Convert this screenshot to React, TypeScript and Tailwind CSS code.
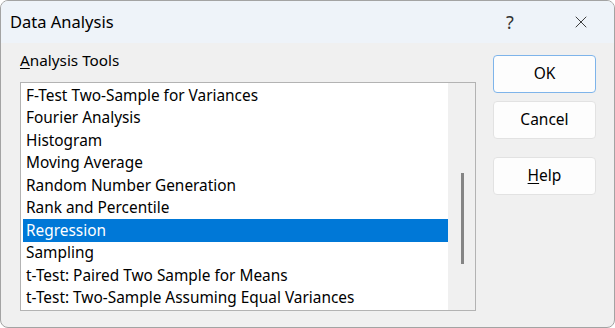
import { X } from "lucide-react";

const tools = [
  "F-Test Two-Sample for Variances",
  "Fourier Analysis",
  "Histogram",
  "Moving Average",
  "Random Number Generation",
  "Rank and Percentile",
  "Regression",
  "Sampling",
  "t-Test: Paired Two Sample for Means",
  "t-Test: Two-Sample Assuming Equal Variances",
];

const selected = "Regression";

export default function App() {
  return (
    <div className="w-[615px] h-[328px] bg-white font-['Noto_Sans',sans-serif] text-[#000]">
      <div className="flex h-full flex-col overflow-hidden rounded-[8px] border border-[#a3a3a3] bg-[#f0f0f0]">
        {/* Title bar */}
        <div className="flex h-[42px] shrink-0 items-center bg-[#eef3f9]">
          <span className="pl-[9px] text-[16.5px]">Data Analysis</span>
          <span className="ml-auto w-[30px] text-center text-[18px] text-[#333]">?</span>
          <div className="ml-[46px] mr-[23px] flex w-[20px] justify-center">
            <X size={30} strokeWidth={1.05} className="text-[#222]" />
          </div>
        </div>

        {/* Body */}
        <div className="flex flex-1">
          <div className="flex flex-col pl-[19px] pt-[7px]">
            <div className="h-[32px] text-[15.3px] leading-[20px]">
              <span className="underline underline-offset-[2px]">A</span>nalysis Tools
            </div>
            <div className="flex h-[229px] w-[456px] border border-[#b3b3b3] bg-[#f0f0f0]">
              <div className="w-[427px] bg-white pt-[1px] pl-[2px]">
                {tools.map((t) => (
                  <div
                    key={t}
                    className={
                      t === selected
                        ? "flex h-[22.5px] items-center bg-[#0078d7] pl-[3px] text-[15.4px] text-white"
                        : "flex h-[22.5px] items-center pl-[3px] text-[15.4px]"
                    }
                  >
                    {t}
                  </div>
                ))}
              </div>
              <div className="flex flex-1 justify-center pt-[90px] pl-[1px]">
                <div className="h-[91px] w-[3px] bg-[#858585]" />
              </div>
            </div>
          </div>

          <div className="ml-[17px] flex flex-col pt-[12px]">
            <button
              type="button"
              className="h-[38px] w-[103px] rounded-[4px] border border-[#7eb4ea] bg-[#fdfdfd] text-[15.5px]"
            >
              OK
            </button>
            <button
              type="button"
              className="mt-[8px] h-[38px] w-[103px] rounded-[4px] border border-[#e2e2e2] bg-[#fdfdfd] text-[15.5px]"
            >
              Cancel
            </button>
            <button
              type="button"
              className="mt-[18px] h-[38px] w-[103px] rounded-[4px] border border-[#e2e2e2] bg-[#fdfdfd] text-[15.5px]"
            >
              <span className="underline underline-offset-[2px]">H</span>elp
            </button>
          </div>
        </div>
      </div>
    </div>
  );
}
